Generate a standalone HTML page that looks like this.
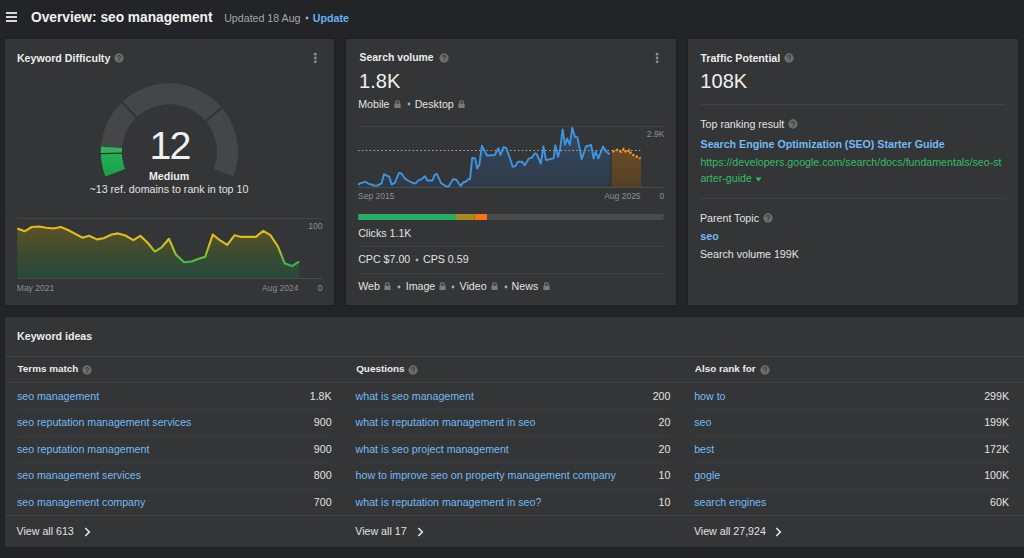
<!DOCTYPE html>
<html><head><meta charset="utf-8"><style>
html,body{margin:0;padding:0}
body{width:1024px;height:558px;position:relative;overflow:hidden;background:#232427;font-family:"Liberation Sans", sans-serif}
.t{position:absolute;white-space:nowrap}
.ab{position:absolute}
.panel{position:absolute;background:#343537;box-shadow:0 0 2px rgba(0,0,0,0.35)}
.q{position:absolute;border-radius:50%;background:#6c6d6f}
.q::after{content:"?";position:absolute;left:0;right:0;top:0;text-align:center;font-weight:700;color:#333436;font-size:8px;line-height:9.3px}
</style></head><body>
<div class="ab" style="left:6px;top:12px;width:11px;height:2px;background:#d9d9d9"></div>
<div class="ab" style="left:6px;top:16px;width:11px;height:2px;background:#d9d9d9"></div>
<div class="ab" style="left:6px;top:20px;width:11px;height:2px;background:#d9d9d9"></div>
<div class="t" style="left:31.00px;top:11.00px;font-size:13.73px;line-height:13.73px;font-weight:700;color:#f2f2f2;">Overview: seo management</div>
<div class="t" style="left:224.20px;top:13.00px;font-size:10.65px;line-height:10.65px;font-weight:400;color:#a4a5a7;">Updated 18 Aug</div>
<svg class="ab" style="left:305.30px;top:16.40px" width="4" height="4" viewBox="0 0 4 4"><circle cx="2" cy="2" r="1.45" fill="#a4a5a7"/></svg>
<div class="t" style="left:312.80px;top:13.00px;font-size:10.65px;line-height:10.65px;font-weight:700;color:#66b2f6;">Update</div>
<div class="ab" style="left:0px;top:212px;width:5px;height:1px;background:#2b2c2f"></div>
<div class="panel" style="left:5px;top:39px;width:329px;height:266px"></div>
<div class="panel" style="left:346px;top:39px;width:330px;height:266px"></div>
<div class="panel" style="left:688px;top:39px;width:330px;height:266px"></div>
<div class="panel" style="left:5px;top:317px;width:1030px;height:230px"></div>
<div class="t" style="left:16.90px;top:53.00px;font-size:10.65px;line-height:10.65px;font-weight:700;color:#ececec;">Keyword Difficulty</div>
<svg class="ab" style="left:114.30px;top:52.60px" width="10" height="10" viewBox="0 0 10 10"><circle cx="5" cy="5" r="4.65" fill="#6c6d6f"/><path d="M3.5,3.9 C3.5,2.9 4.2,2.4 5,2.4 C5.9,2.4 6.5,3 6.5,3.7 C6.5,4.6 5.2,4.8 5.2,5.9" fill="none" stroke="#38393b" stroke-width="1.05"/><circle cx="5.2" cy="7.3" r="0.6" fill="#38393b"/></svg>
<svg class="ab" style="left:312px;top:50px" width="7" height="16" viewBox="0 0 7 16"><circle cx="3.3" cy="4.2" r="1.4" fill="#8e8f91"/><circle cx="3.3" cy="8.0" r="1.4" fill="#8e8f91"/><circle cx="3.3" cy="11.8" r="1.4" fill="#8e8f91"/></svg>
<svg class="ab" style="left:0;top:0" width="340" height="310" viewBox="0 0 340 310">
<defs>
<linearGradient id="gg" x1="0" y1="150" x2="0" y2="178" gradientUnits="userSpaceOnUse"><stop offset="0" stop-color="#24b055"/><stop offset="1" stop-color="#17a24a"/></linearGradient>
<linearGradient id="kdfill" x1="0" y1="226" x2="0" y2="278" gradientUnits="userSpaceOnUse">
<stop offset="0" stop-color="#5c5227"/><stop offset="0.55" stop-color="#3c4b30"/><stop offset="1" stop-color="#264a3c"/></linearGradient>
<linearGradient id="kdstroke" x1="0" y1="226" x2="0" y2="266" gradientUnits="userSpaceOnUse">
<stop offset="0" stop-color="#ebb61c"/><stop offset="0.45" stop-color="#d6c21e"/><stop offset="0.75" stop-color="#6cc23a"/><stop offset="1" stop-color="#2cb552"/></linearGradient>
</defs>
<path d="M105.36,176.48 A68.6,68.6 0 1 1 233.44,176.48 L213.84,168.96 A47.6,47.6 0 1 0 124.96,168.96 Z" fill="#454648"/>
<path d="M105.36,176.48 A68.6,68.6 0 0 1 100.99,146.75 L121.93,148.32 A47.6,47.6 0 0 0 124.96,168.96 Z" fill="url(#gg)"/>
<path d="M100.82,153.65 A68.6,68.6 0 0 1 100.99,146.75 L121.93,148.32 A47.6,47.6 0 0 0 121.82,153.12 Z" fill="#2eb35c"/>
<path d="M121.28,101.61 L137.18,118.23" stroke="#333436" stroke-width="2.2"/>
<path d="M222.50,106.91 L204.96,121.78" stroke="#333436" stroke-width="2.2"/>
<path d="M99.82,153.68 L122.82,153.09" stroke="#2b2c2e" stroke-width="1.2"/>
<rect x="17" y="218" width="305" height="1" fill="#434446"/>
<path d="M17.3,228.5 L24.5,231.3 L31.8,227.0 L39.0,226.5 L46.3,227.7 L53.5,228.5 L60.8,227.0 L68.0,230.0 L75.3,233.9 L82.6,237.7 L89.0,235.8 L97.0,239.4 L103.5,238.2 L111.6,234.5 L118.0,233.4 L125.3,235.5 L133.4,240.2 L140.3,235.8 L147.9,243.0 L154.8,251.6 L161.6,247.4 L169.0,238.8 L175.8,254.5 L184.1,262.3 L191.5,261.5 L198.2,259.0 L205.2,256.8 L212.8,234.6 L219.8,240.2 L227.2,244.9 L234.7,235.2 L241.3,236.9 L248.8,236.9 L255.9,236.9 L263.3,230.8 L270.4,235.2 L277.9,246.5 L284.8,263.5 L292.0,266.1 L299.1,261.6 L299.1,278 L17.3,278 Z" fill="url(#kdfill)"/>
<rect x="17" y="278" width="305" height="1" fill="#4a4b4d"/>
<path d="M17.3,228.5 L24.5,231.3 L31.8,227.0 L39.0,226.5 L46.3,227.7 L53.5,228.5 L60.8,227.0 L68.0,230.0 L75.3,233.9 L82.6,237.7 L89.0,235.8 L97.0,239.4 L103.5,238.2 L111.6,234.5 L118.0,233.4 L125.3,235.5 L133.4,240.2 L140.3,235.8 L147.9,243.0 L154.8,251.6 L161.6,247.4 L169.0,238.8 L175.8,254.5 L184.1,262.3 L191.5,261.5 L198.2,259.0 L205.2,256.8 L212.8,234.6 L219.8,240.2 L227.2,244.9 L234.7,235.2 L241.3,236.9 L248.8,236.9 L255.9,236.9 L263.3,230.8 L270.4,235.2 L277.9,246.5 L284.8,263.5 L292.0,266.1 L299.1,261.6" fill="none" stroke="url(#kdstroke)" stroke-width="2.1" stroke-linejoin="round"/>
</svg>
<div class="t" style="left:149.60px;top:126.00px;font-size:39.4px;line-height:39.4px;font-weight:400;color:#f0f0f0;letter-spacing:-2px">12</div>
<div class="t" style="left:149.00px;top:171.00px;font-size:10.65px;line-height:10.65px;font-weight:700;color:#eeeeee;">Medium</div>
<div class="t" style="left:89.50px;top:184.00px;font-size:10.65px;line-height:10.65px;font-weight:400;color:#e2e2e2;">~13 ref. domains to rank in top 10</div>
<div class="t" style="right:701.50px;top:222.00px;font-size:8.5px;line-height:8.5px;font-weight:400;color:#8d8e90;text-align:right;">100</div>
<div class="t" style="left:16.80px;top:284.00px;font-size:8.5px;line-height:8.5px;font-weight:400;color:#8d8e90;">May 2021</div>
<div class="t" style="right:725.50px;top:284.00px;font-size:8.5px;line-height:8.5px;font-weight:400;color:#8d8e90;text-align:right;">Aug 2024</div>
<div class="t" style="right:701.50px;top:284.00px;font-size:8.5px;line-height:8.5px;font-weight:400;color:#8d8e90;text-align:right;">0</div>
<div class="t" style="left:359.60px;top:53.00px;font-size:10.4px;line-height:10.4px;font-weight:700;color:#ececec;">Search volume</div>
<svg class="ab" style="left:438.70px;top:53.00px" width="10" height="10" viewBox="0 0 10 10"><circle cx="5" cy="5" r="4.65" fill="#6c6d6f"/><path d="M3.5,3.9 C3.5,2.9 4.2,2.4 5,2.4 C5.9,2.4 6.5,3 6.5,3.7 C6.5,4.6 5.2,4.8 5.2,5.9" fill="none" stroke="#38393b" stroke-width="1.05"/><circle cx="5.2" cy="7.3" r="0.6" fill="#38393b"/></svg>
<svg class="ab" style="left:654px;top:50px" width="7" height="16" viewBox="0 0 7 16"><circle cx="3.1" cy="4.2" r="1.4" fill="#8e8f91"/><circle cx="3.1" cy="8.0" r="1.4" fill="#8e8f91"/><circle cx="3.1" cy="11.8" r="1.4" fill="#8e8f91"/></svg>
<div class="t" style="left:359.00px;top:71.00px;font-size:20.1px;line-height:20.1px;font-weight:400;color:#f0f0f0;">1.8K</div>
<div class="t" style="left:358.20px;top:99.00px;font-size:10.65px;line-height:10.65px;font-weight:400;color:#e2e2e2;">Mobile</div>
<svg class="ab" style="left:393.9px;top:99.7px" width="7" height="8" viewBox="0 0 7 8"><path d="M1.6,3.6 V2.6 A1.9,1.9 0 0 1 5.4,2.6 V3.6" fill="none" stroke="#7b7c7e" stroke-width="1.1"/><rect x="0.4" y="3.5" width="6.2" height="4.5" rx="0.6" fill="#7b7c7e"/></svg>
<svg class="ab" style="left:406.50px;top:101.80px" width="4" height="4" viewBox="0 0 4 4"><circle cx="2" cy="2" r="1.45" fill="#a9aaac"/></svg>
<div class="t" style="left:414.70px;top:99.00px;font-size:10.65px;line-height:10.65px;font-weight:400;color:#e2e2e2;">Desktop</div>
<svg class="ab" style="left:458.3px;top:99.7px" width="7" height="8" viewBox="0 0 7 8"><path d="M1.6,3.6 V2.6 A1.9,1.9 0 0 1 5.4,2.6 V3.6" fill="none" stroke="#7b7c7e" stroke-width="1.1"/><rect x="0.4" y="3.5" width="6.2" height="4.5" rx="0.6" fill="#7b7c7e"/></svg>
<svg class="ab" style="left:0;top:0" width="680" height="310" viewBox="0 0 680 310">
<defs>
<linearGradient id="svfill" x1="0" y1="128" x2="0" y2="187" gradientUnits="userSpaceOnUse">
<stop offset="0" stop-color="#344a63"/><stop offset="1" stop-color="#2f3a48"/></linearGradient>
<linearGradient id="fcfill" x1="0" y1="150" x2="0" y2="187" gradientUnits="userSpaceOnUse">
<stop offset="0" stop-color="#6a4a24"/><stop offset="1" stop-color="#544028"/></linearGradient>
</defs>
<rect x="358" y="126" width="305.5" height="1" fill="#434446"/>
<path d="M358.2,184.8 L360.2,183.1 L362.8,182.7 L365.7,181.7 L368.7,183.9 L371.3,184.3 L373.8,185.6 L377.2,185.6 L381.5,183.4 L384.0,174.2 L389.1,176.6 L391.7,184.4 L394.6,183.1 L399.0,172.9 L401.1,173.2 L405.3,178.8 L408.7,181.0 L413.8,183.4 L415.5,183.4 L418.9,180.0 L421.5,179.3 L424.9,176.3 L427.4,180.5 L432.6,180.5 L434.3,175.4 L436.8,173.7 L441.1,183.1 L446.2,186.5 L448.7,186.5 L453.0,179.3 L456.4,179.7 L460.6,186.1 L463.2,182.2 L465.7,181.7 L468.3,179.3 L470.0,179.3 L472.2,157.9 L475.1,158.4 L477.3,168.6 L479.4,164.4 L481.9,145.6 L487.0,155.5 L494.7,155.0 L498.4,148.2 L500.6,155.0 L503.4,147.3 L506.0,147.7 L508.5,154.1 L511.1,161.8 L512.8,166.9 L515.3,166.1 L517.9,161.8 L522.1,161.8 L524.7,165.2 L528.9,158.4 L531.5,157.9 L534.9,153.3 L536.6,153.8 L540.8,163.5 L543.4,146.5 L546.0,160.1 L551.1,158.9 L553.6,158.4 L555.3,145.3 L557.9,156.7 L559.9,150.7 L562.6,129.5 L565.0,144.8 L567.2,138.5 L569.8,144.8 L572.3,127.8 L574.9,137.1 L577.4,137.1 L581.7,159.2 L585.9,146.5 L591.0,144.8 L593.6,158.4 L595.6,151.6 L598.4,158.4 L603.0,146.5 L606.4,151.6 L609.8,154.5 L609.8,187.3 L358.2,187.3 Z" fill="url(#svfill)"/>
<path d="M611.8,151 L612.3,151.5 L613.4,151.2 L617.5,149.7 L621.1,151.6 L623.7,149.0 L626.4,152.5 L629.1,150.3 L631.4,153.9 L635.8,156.1 L638.7,157.5 L640.5,158.5 L641,153.5 L641,187.3 L611.8,187.3 Z" fill="url(#fcfill)"/>
<rect x="358" y="187" width="305.5" height="1" fill="#4a4b4d"/>
<line x1="358" y1="150.5" x2="641" y2="150.5" stroke="#a9aaab" stroke-width="1" stroke-dasharray="1.5,2.4"/>
<path d="M358.2,184.8 L360.2,183.1 L362.8,182.7 L365.7,181.7 L368.7,183.9 L371.3,184.3 L373.8,185.6 L377.2,185.6 L381.5,183.4 L384.0,174.2 L389.1,176.6 L391.7,184.4 L394.6,183.1 L399.0,172.9 L401.1,173.2 L405.3,178.8 L408.7,181.0 L413.8,183.4 L415.5,183.4 L418.9,180.0 L421.5,179.3 L424.9,176.3 L427.4,180.5 L432.6,180.5 L434.3,175.4 L436.8,173.7 L441.1,183.1 L446.2,186.5 L448.7,186.5 L453.0,179.3 L456.4,179.7 L460.6,186.1 L463.2,182.2 L465.7,181.7 L468.3,179.3 L470.0,179.3 L472.2,157.9 L475.1,158.4 L477.3,168.6 L479.4,164.4 L481.9,145.6 L487.0,155.5 L494.7,155.0 L498.4,148.2 L500.6,155.0 L503.4,147.3 L506.0,147.7 L508.5,154.1 L511.1,161.8 L512.8,166.9 L515.3,166.1 L517.9,161.8 L522.1,161.8 L524.7,165.2 L528.9,158.4 L531.5,157.9 L534.9,153.3 L536.6,153.8 L540.8,163.5 L543.4,146.5 L546.0,160.1 L551.1,158.9 L553.6,158.4 L555.3,145.3 L557.9,156.7 L559.9,150.7 L562.6,129.5 L565.0,144.8 L567.2,138.5 L569.8,144.8 L572.3,127.8 L574.9,137.1 L577.4,137.1 L581.7,159.2 L585.9,146.5 L591.0,144.8 L593.6,158.4 L595.6,151.6 L598.4,158.4 L603.0,146.5 L606.4,151.6 L609.8,154.5" fill="none" stroke="#3d95e0" stroke-width="1.9" stroke-linejoin="round"/>
<path d="M612.3,151.5 L613.4,151.2 L617.5,149.7 L621.1,151.6 L623.7,149.0 L626.4,152.5 L629.1,150.3 L631.4,153.9 L635.8,156.1 L638.7,157.5 L640.5,158.5" fill="none" stroke="#f39a1e" stroke-width="2.3" stroke-dasharray="2.2,1.6"/>
<rect x="358.2" y="214" width="97.7" height="6" fill="#27ae66"/>
<rect x="455.9" y="214" width="18.7" height="6" fill="#a68a1e"/>
<rect x="474.6" y="214" width="12.4" height="6" fill="#f87316"/>
<rect x="487" y="214" width="176.5" height="6" fill="#4a4a4c"/>
</svg>
<div class="t" style="right:359.70px;top:130.00px;font-size:8.5px;line-height:8.5px;font-weight:400;color:#8d8e90;text-align:right;">2.9K</div>
<div class="t" style="left:358.00px;top:192.00px;font-size:8.5px;line-height:8.5px;font-weight:400;color:#8d8e90;">Sep 2015</div>
<div class="t" style="right:383.40px;top:192.00px;font-size:8.5px;line-height:8.5px;font-weight:400;color:#8d8e90;text-align:right;">Aug 2025</div>
<div class="t" style="right:359.70px;top:192.00px;font-size:8.5px;line-height:8.5px;font-weight:400;color:#8d8e90;text-align:right;">0</div>
<div class="t" style="left:358.20px;top:228.00px;font-size:10.65px;line-height:10.65px;font-weight:400;color:#e2e2e2;">Clicks 1.1K</div>
<div class="ab" style="left:358px;top:246px;width:305.5px;height:1px;background:#404143"></div>
<div class="t" style="left:358.20px;top:254.00px;font-size:10.65px;line-height:10.65px;font-weight:400;color:#e2e2e2;">CPC $7.00</div>
<svg class="ab" style="left:414.60px;top:257.90px" width="4" height="4" viewBox="0 0 4 4"><circle cx="2" cy="2" r="1.45" fill="#a9aaac"/></svg>
<div class="t" style="left:423.00px;top:254.00px;font-size:10.65px;line-height:10.65px;font-weight:400;color:#e2e2e2;">CPS 0.59</div>
<div class="ab" style="left:358px;top:273px;width:305.5px;height:1px;background:#404143"></div>
<div class="t" style="left:358.20px;top:281.00px;font-size:10.65px;line-height:10.65px;font-weight:400;color:#e2e2e2;">Web</div>
<svg class="ab" style="left:384.3px;top:281.7px" width="7" height="8" viewBox="0 0 7 8"><path d="M1.6,3.6 V2.6 A1.9,1.9 0 0 1 5.4,2.6 V3.6" fill="none" stroke="#7b7c7e" stroke-width="1.1"/><rect x="0.4" y="3.5" width="6.2" height="4.5" rx="0.6" fill="#7b7c7e"/></svg>
<svg class="ab" style="left:397.10px;top:284.60px" width="4" height="4" viewBox="0 0 4 4"><circle cx="2" cy="2" r="1.45" fill="#a9aaac"/></svg>
<div class="t" style="left:405.70px;top:281.00px;font-size:10.65px;line-height:10.65px;font-weight:400;color:#e2e2e2;">Image</div>
<svg class="ab" style="left:439.2px;top:281.5px" width="7" height="8" viewBox="0 0 7 8"><path d="M1.6,3.6 V2.6 A1.9,1.9 0 0 1 5.4,2.6 V3.6" fill="none" stroke="#7b7c7e" stroke-width="1.1"/><rect x="0.4" y="3.5" width="6.2" height="4.5" rx="0.6" fill="#7b7c7e"/></svg>
<svg class="ab" style="left:451.30px;top:284.60px" width="4" height="4" viewBox="0 0 4 4"><circle cx="2" cy="2" r="1.45" fill="#a9aaac"/></svg>
<div class="t" style="left:459.60px;top:281.00px;font-size:10.65px;line-height:10.65px;font-weight:400;color:#e2e2e2;">Video</div>
<svg class="ab" style="left:491.2px;top:281.5px" width="7" height="8" viewBox="0 0 7 8"><path d="M1.6,3.6 V2.6 A1.9,1.9 0 0 1 5.4,2.6 V3.6" fill="none" stroke="#7b7c7e" stroke-width="1.1"/><rect x="0.4" y="3.5" width="6.2" height="4.5" rx="0.6" fill="#7b7c7e"/></svg>
<svg class="ab" style="left:503.60px;top:284.60px" width="4" height="4" viewBox="0 0 4 4"><circle cx="2" cy="2" r="1.45" fill="#a9aaac"/></svg>
<div class="t" style="left:511.60px;top:281.00px;font-size:10.65px;line-height:10.65px;font-weight:400;color:#e2e2e2;">News</div>
<svg class="ab" style="left:543px;top:281.5px" width="7" height="8" viewBox="0 0 7 8"><path d="M1.6,3.6 V2.6 A1.9,1.9 0 0 1 5.4,2.6 V3.6" fill="none" stroke="#7b7c7e" stroke-width="1.1"/><rect x="0.4" y="3.5" width="6.2" height="4.5" rx="0.6" fill="#7b7c7e"/></svg>
<div class="t" style="left:700.40px;top:53.00px;font-size:10.65px;line-height:10.65px;font-weight:700;color:#ececec;">Traffic Potential</div>
<svg class="ab" style="left:784.40px;top:52.60px" width="10" height="10" viewBox="0 0 10 10"><circle cx="5" cy="5" r="4.65" fill="#6c6d6f"/><path d="M3.5,3.9 C3.5,2.9 4.2,2.4 5,2.4 C5.9,2.4 6.5,3 6.5,3.7 C6.5,4.6 5.2,4.8 5.2,5.9" fill="none" stroke="#38393b" stroke-width="1.05"/><circle cx="5.2" cy="7.3" r="0.6" fill="#38393b"/></svg>
<div class="t" style="left:700.30px;top:71.00px;font-size:20.1px;line-height:20.1px;font-weight:400;color:#f0f0f0;">108K</div>
<div class="ab" style="left:700px;top:104px;width:305px;height:1px;background:#404143"></div>
<div class="t" style="left:700.30px;top:119.00px;font-size:10.65px;line-height:10.65px;font-weight:400;color:#e2e2e2;">Top ranking result</div>
<svg class="ab" style="left:788.20px;top:119.00px" width="10" height="10" viewBox="0 0 10 10"><circle cx="5" cy="5" r="4.65" fill="#6c6d6f"/><path d="M3.5,3.9 C3.5,2.9 4.2,2.4 5,2.4 C5.9,2.4 6.5,3 6.5,3.7 C6.5,4.6 5.2,4.8 5.2,5.9" fill="none" stroke="#38393b" stroke-width="1.05"/><circle cx="5.2" cy="7.3" r="0.6" fill="#38393b"/></svg>
<div class="t" style="left:700.60px;top:139.00px;font-size:10.65px;line-height:10.65px;font-weight:700;color:#72bbf5;">Search Engine Optimization (SEO) Starter Guide</div>
<div class="t" style="left:700.40px;top:157.00px;font-size:10.65px;line-height:10.65px;font-weight:400;color:#31bd66;">https://developers.google.com/search/docs/fundamentals/seo-st</div>
<div class="t" style="left:700.40px;top:173.00px;font-size:10.65px;line-height:10.65px;font-weight:400;color:#31bd66;">arter-guide</div>
<svg class="ab" style="left:754.5px;top:176.5px" width="7" height="5" viewBox="0 0 7 5"><path d="M0.4,0.5 L6.6,0.5 L3.5,4.6 Z" fill="#31bd66"/></svg>
<div class="ab" style="left:700px;top:198px;width:305px;height:1px;background:#404143"></div>
<div class="t" style="left:700.00px;top:213.00px;font-size:10.65px;line-height:10.65px;font-weight:400;color:#e2e2e2;">Parent Topic</div>
<svg class="ab" style="left:763.40px;top:213.20px" width="10" height="10" viewBox="0 0 10 10"><circle cx="5" cy="5" r="4.65" fill="#6c6d6f"/><path d="M3.5,3.9 C3.5,2.9 4.2,2.4 5,2.4 C5.9,2.4 6.5,3 6.5,3.7 C6.5,4.6 5.2,4.8 5.2,5.9" fill="none" stroke="#38393b" stroke-width="1.05"/><circle cx="5.2" cy="7.3" r="0.6" fill="#38393b"/></svg>
<div class="t" style="left:700.30px;top:231.00px;font-size:10.65px;line-height:10.65px;font-weight:700;color:#72bbf5;">seo</div>
<div class="t" style="left:700.00px;top:249.00px;font-size:10.65px;line-height:10.65px;font-weight:400;color:#e2e2e2;">Search volume 199K</div>
<div class="t" style="left:17.10px;top:331.00px;font-size:10.65px;line-height:10.65px;font-weight:700;color:#ececec;">Keyword ideas</div>
<div class="ab" style="left:5px;top:356px;width:1019px;height:1px;background:#3f4042"></div>
<div class="ab" style="left:5px;top:382px;width:1019px;height:1px;background:#3f4042"></div>
<div class="ab" style="left:5px;top:515px;width:1019px;height:1px;background:#3f4042"></div>
<div class="t" style="left:17.50px;top:364.00px;font-size:9.9px;line-height:9.9px;font-weight:700;color:#ececec;">Terms match</div>
<div class="t" style="left:16.90px;top:391.00px;font-size:10.65px;line-height:10.65px;font-weight:400;color:#72bbf5;">seo management</div>
<div class="t" style="right:692.40px;top:391.00px;font-size:10.65px;line-height:10.65px;font-weight:400;color:#e2e2e2;text-align:right;">1.8K</div>
<div class="t" style="left:16.90px;top:417.00px;font-size:10.65px;line-height:10.65px;font-weight:400;color:#72bbf5;">seo reputation management services</div>
<div class="t" style="right:692.40px;top:417.00px;font-size:10.65px;line-height:10.65px;font-weight:400;color:#e2e2e2;text-align:right;">900</div>
<div class="t" style="left:16.90px;top:444.00px;font-size:10.65px;line-height:10.65px;font-weight:400;color:#72bbf5;">seo reputation management</div>
<div class="t" style="right:692.40px;top:444.00px;font-size:10.65px;line-height:10.65px;font-weight:400;color:#e2e2e2;text-align:right;">900</div>
<div class="t" style="left:16.90px;top:470.00px;font-size:10.65px;line-height:10.65px;font-weight:400;color:#72bbf5;">seo management services</div>
<div class="t" style="right:692.40px;top:470.00px;font-size:10.65px;line-height:10.65px;font-weight:400;color:#e2e2e2;text-align:right;">800</div>
<div class="t" style="left:16.90px;top:497.00px;font-size:10.65px;line-height:10.65px;font-weight:400;color:#72bbf5;">seo management company</div>
<div class="t" style="right:692.40px;top:497.00px;font-size:10.65px;line-height:10.65px;font-weight:400;color:#e2e2e2;text-align:right;">700</div>
<div class="ab" style="left:17px;top:409px;width:314px;height:1px;background:#3c3d3f"></div>
<div class="ab" style="left:17px;top:435.5px;width:314px;height:1px;background:#3c3d3f"></div>
<div class="ab" style="left:17px;top:462px;width:314px;height:1px;background:#3c3d3f"></div>
<div class="ab" style="left:17px;top:488.5px;width:314px;height:1px;background:#3c3d3f"></div>
<div class="t" style="left:16.60px;top:526.00px;font-size:10.65px;line-height:10.65px;font-weight:400;color:#e2e2e2;">View all 613</div>
<div class="t" style="left:356.20px;top:364.00px;font-size:9.9px;line-height:9.9px;font-weight:700;color:#ececec;">Questions</div>
<div class="t" style="left:355.60px;top:391.00px;font-size:10.65px;line-height:10.65px;font-weight:400;color:#72bbf5;">what is seo management</div>
<div class="t" style="right:353.60px;top:391.00px;font-size:10.65px;line-height:10.65px;font-weight:400;color:#e2e2e2;text-align:right;">200</div>
<div class="t" style="left:355.60px;top:417.00px;font-size:10.65px;line-height:10.65px;font-weight:400;color:#72bbf5;">what is reputation management in seo</div>
<div class="t" style="right:353.60px;top:417.00px;font-size:10.65px;line-height:10.65px;font-weight:400;color:#e2e2e2;text-align:right;">20</div>
<div class="t" style="left:355.60px;top:444.00px;font-size:10.65px;line-height:10.65px;font-weight:400;color:#72bbf5;">what is seo project management</div>
<div class="t" style="right:353.60px;top:444.00px;font-size:10.65px;line-height:10.65px;font-weight:400;color:#e2e2e2;text-align:right;">20</div>
<div class="t" style="left:355.60px;top:470.00px;font-size:10.65px;line-height:10.65px;font-weight:400;color:#72bbf5;">how to improve seo on property management company</div>
<div class="t" style="right:353.60px;top:470.00px;font-size:10.65px;line-height:10.65px;font-weight:400;color:#e2e2e2;text-align:right;">10</div>
<div class="t" style="left:355.60px;top:497.00px;font-size:10.65px;line-height:10.65px;font-weight:400;color:#72bbf5;">what is reputation management in seo?</div>
<div class="t" style="right:353.60px;top:497.00px;font-size:10.65px;line-height:10.65px;font-weight:400;color:#e2e2e2;text-align:right;">10</div>
<div class="ab" style="left:355.7px;top:409px;width:314.09999999999997px;height:1px;background:#3c3d3f"></div>
<div class="ab" style="left:355.7px;top:435.5px;width:314.09999999999997px;height:1px;background:#3c3d3f"></div>
<div class="ab" style="left:355.7px;top:462px;width:314.09999999999997px;height:1px;background:#3c3d3f"></div>
<div class="ab" style="left:355.7px;top:488.5px;width:314.09999999999997px;height:1px;background:#3c3d3f"></div>
<div class="t" style="left:355.30px;top:526.00px;font-size:10.65px;line-height:10.65px;font-weight:400;color:#e2e2e2;">View all 17</div>
<div class="t" style="left:694.80px;top:364.00px;font-size:9.9px;line-height:9.9px;font-weight:700;color:#ececec;">Also rank for</div>
<div class="t" style="left:694.20px;top:391.00px;font-size:10.65px;line-height:10.65px;font-weight:400;color:#72bbf5;">how to</div>
<div class="t" style="right:15.00px;top:391.00px;font-size:10.65px;line-height:10.65px;font-weight:400;color:#e2e2e2;text-align:right;">299K</div>
<div class="t" style="left:694.20px;top:417.00px;font-size:10.65px;line-height:10.65px;font-weight:400;color:#72bbf5;">seo</div>
<div class="t" style="right:15.00px;top:417.00px;font-size:10.65px;line-height:10.65px;font-weight:400;color:#e2e2e2;text-align:right;">199K</div>
<div class="t" style="left:694.20px;top:444.00px;font-size:10.65px;line-height:10.65px;font-weight:400;color:#72bbf5;">best</div>
<div class="t" style="right:15.00px;top:444.00px;font-size:10.65px;line-height:10.65px;font-weight:400;color:#e2e2e2;text-align:right;">172K</div>
<div class="t" style="left:694.20px;top:470.00px;font-size:10.65px;line-height:10.65px;font-weight:400;color:#72bbf5;">gogle</div>
<div class="t" style="right:15.00px;top:470.00px;font-size:10.65px;line-height:10.65px;font-weight:400;color:#e2e2e2;text-align:right;">100K</div>
<div class="t" style="left:694.20px;top:497.00px;font-size:10.65px;line-height:10.65px;font-weight:400;color:#72bbf5;">search engines</div>
<div class="t" style="right:15.00px;top:497.00px;font-size:10.65px;line-height:10.65px;font-weight:400;color:#e2e2e2;text-align:right;">60K</div>
<div class="ab" style="left:694.3px;top:409px;width:314.1px;height:1px;background:#3c3d3f"></div>
<div class="ab" style="left:694.3px;top:435.5px;width:314.1px;height:1px;background:#3c3d3f"></div>
<div class="ab" style="left:694.3px;top:462px;width:314.1px;height:1px;background:#3c3d3f"></div>
<div class="ab" style="left:694.3px;top:488.5px;width:314.1px;height:1px;background:#3c3d3f"></div>
<div class="t" style="left:693.90px;top:526.00px;font-size:10.65px;line-height:10.65px;font-weight:400;color:#e2e2e2;">View all 27,924</div>
<svg class="ab" style="left:81.60px;top:364.50px" width="10" height="10" viewBox="0 0 10 10"><circle cx="5" cy="5" r="4.65" fill="#6c6d6f"/><path d="M3.5,3.9 C3.5,2.9 4.2,2.4 5,2.4 C5.9,2.4 6.5,3 6.5,3.7 C6.5,4.6 5.2,4.8 5.2,5.9" fill="none" stroke="#38393b" stroke-width="1.05"/><circle cx="5.2" cy="7.3" r="0.6" fill="#38393b"/></svg>
<svg class="ab" style="left:407.60px;top:364.50px" width="10" height="10" viewBox="0 0 10 10"><circle cx="5" cy="5" r="4.65" fill="#6c6d6f"/><path d="M3.5,3.9 C3.5,2.9 4.2,2.4 5,2.4 C5.9,2.4 6.5,3 6.5,3.7 C6.5,4.6 5.2,4.8 5.2,5.9" fill="none" stroke="#38393b" stroke-width="1.05"/><circle cx="5.2" cy="7.3" r="0.6" fill="#38393b"/></svg>
<svg class="ab" style="left:759.50px;top:364.50px" width="10" height="10" viewBox="0 0 10 10"><circle cx="5" cy="5" r="4.65" fill="#6c6d6f"/><path d="M3.5,3.9 C3.5,2.9 4.2,2.4 5,2.4 C5.9,2.4 6.5,3 6.5,3.7 C6.5,4.6 5.2,4.8 5.2,5.9" fill="none" stroke="#38393b" stroke-width="1.05"/><circle cx="5.2" cy="7.3" r="0.6" fill="#38393b"/></svg>
<svg class="ab" style="left:84.0px;top:527.3px" width="7" height="10" viewBox="0 0 7 10"><path d="M1.3,1 L5.3,5 L1.3,9" fill="none" stroke="#e6e6e6" stroke-width="1.6"/></svg>
<svg class="ab" style="left:417.0px;top:527.3px" width="7" height="10" viewBox="0 0 7 10"><path d="M1.3,1 L5.3,5 L1.3,9" fill="none" stroke="#e6e6e6" stroke-width="1.6"/></svg>
<svg class="ab" style="left:775.0px;top:527.3px" width="7" height="10" viewBox="0 0 7 10"><path d="M1.3,1 L5.3,5 L1.3,9" fill="none" stroke="#e6e6e6" stroke-width="1.6"/></svg>
</body></html>
